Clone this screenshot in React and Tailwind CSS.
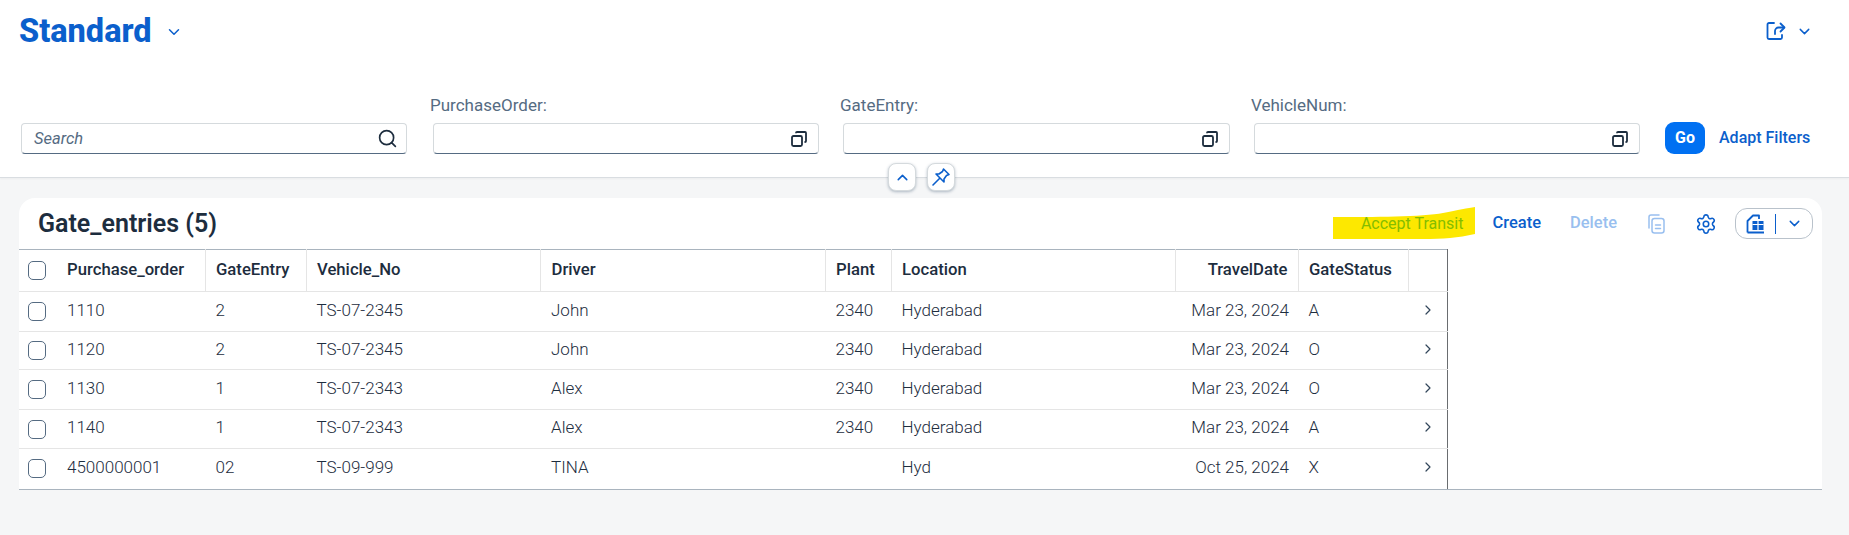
import React from 'react';
import { ChevronDown, ChevronUp, ChevronRight, Search, Settings } from 'lucide-react';

const rows = [
    { po: '1110', gate: '2', vehicle: 'TS-07-2345', driver: 'John', plant: '2340', location: 'Hyderabad', date: 'Mar 23, 2024', status: 'A', h: 'h-[40px]' },
    { po: '1120', gate: '2', vehicle: 'TS-07-2345', driver: 'John', plant: '2340', location: 'Hyderabad', date: 'Mar 23, 2024', status: 'O', h: 'h-[38px]' },
    { po: '1130', gate: '1', vehicle: 'TS-07-2343', driver: 'Alex', plant: '2340', location: 'Hyderabad', date: 'Mar 23, 2024', status: 'O', h: 'h-[40px]' },
    { po: '1140', gate: '1', vehicle: 'TS-07-2343', driver: 'Alex', plant: '2340', location: 'Hyderabad', date: 'Mar 23, 2024', status: 'A', h: 'h-[39px]' },
    { po: '4500000001', gate: '02', vehicle: 'TS-09-999', driver: 'TINA', plant: '', location: 'Hyd', date: 'Oct 25, 2024', status: 'X', h: 'h-[40px]' },
];

const ValueHelpIcon = () => (
    <svg width="18" height="18" viewBox="0 0 18 18" fill="none" stroke="#1d2d3e" strokeWidth="1.8">
        <rect x="2" y="6" width="10" height="10" rx="1.5" />
        <path d="M6 3.2 V3 a1 1 0 0 1 1-1 h8 a1 1 0 0 1 1 1 v8 a1 1 0 0 1-1 1 h-.5" />
    </svg>
);

const ShareIcon = () => (
    <svg width="20" height="20" viewBox="0 0 20 20" fill="none" stroke="#0b5fcc" strokeWidth="1.8" strokeLinecap="round" strokeLinejoin="round">
        <path d="M8 2 H3 a1.5 1.5 0 0 0-1.5 1.5 v13 A1.5 1.5 0 0 0 3 18 h11.5 a1.5 1.5 0 0 0 1.5-1.5 V14" />
        <path d="M9 13 V10 a3.5 3.5 0 0 1 3.5-3.5 H18" />
        <path d="M14.5 2.5 L18.5 6.5 L14.5 10.5" />
    </svg>
);

const PinIcon = () => (
    <svg width="20" height="20" viewBox="0 0 20 20" fill="none" stroke="#0b5fcc" strokeWidth="1.6" strokeLinejoin="round" strokeLinecap="round">
        <path d="M12.5 2 L18 7.5 L15.5 8.5 L13 12 L13 15 L5 7 L8 7 L11.5 4.5 Z" />
        <path d="M8.5 11.5 L2 18" />
    </svg>
);

const CopyIcon = () => (
    <svg width="18" height="20" viewBox="0 0 18 20" fill="none" stroke="#99bfef" strokeWidth="1.5" strokeLinecap="round" strokeLinejoin="round">
        <path d="M2 14 V3 a2 2 0 0 1 2-2 h8" />
        <rect x="5" y="4.5" width="12" height="14.5" rx="2.5" />
        <path d="M8.5 11 h5 M8.5 14.5 h5" />
    </svg>
);

const TableViewIcon = () => (
    <svg width="19" height="20" viewBox="0 0 19 20" fill="none" stroke="#0b5fcc" strokeWidth="1.8" strokeLinejoin="round">
        <path d="M1.5 18.5 V7 L7 1.5 H13 V5" />
        <path d="M1.5 18.5 H18" />
        <rect x="6.5" y="7" width="11" height="9" fill="#0b5fcc" stroke="none" />
        <path d="M6.5 10.5 h11 M12 7 v9" stroke="#fff" strokeWidth="1.2" />
    </svg>
);

const Field = ({ label, widthClass }) => (
    <div className={`flex flex-col ${widthClass}`}>
        <label className="mb-[8px] ml-[-3px] h-[21px] pt-[1px] text-[17px] leading-[20px] text-[#556b82]">{label}</label>
        <div className="flex h-[31px] items-center justify-end rounded-[4px] border border-[#d5dadd] border-b-[#556b82] pr-[10px]">
            <ValueHelpIcon />
        </div>
    </div>
);

const Checkbox = () => (
    <span className="block h-[19px] w-[18px] rounded-[5px] border border-[#556b82] bg-white" />
);

const HeadCell = ({ children, right }) => (
    <th className={`border-r border-[#e5e5e5] pb-[1px] pl-[10.5px] pr-[10px] text-[16.7px] font-medium text-[#1d2d3e] ${right ? 'text-right' : 'text-left'}`}>
        {children}
    </th>
);

export default function App() {
    return (
        <div className="relative flex h-[535px] flex-col bg-[#f5f6f7] font-['Roboto',sans-serif] text-[#1d2d3e]">
            {/* Filter header */}
            <header className="relative h-[178px] border-b border-[#d9dde1] bg-white shadow-[0_1px_2px_rgba(0,0,0,0.04)]">
                <div className="flex h-[62px] items-center justify-between pl-[19px] pr-[36px]">
                    <div className="flex items-center gap-[13px]">
                        <h1 className="text-[32.5px] font-extrabold leading-none text-[#0b5fcc]">Standard</h1>
                        <ChevronDown size={18} strokeWidth={2} className="mt-[2px] text-[#0b5fcc]" />
                    </div>
                    <div className="flex items-center gap-[10px]">
                        <ShareIcon />
                        <ChevronDown size={17} strokeWidth={2} className="text-[#0b5fcc]" />
                    </div>
                </div>

                <div className="flex items-end pl-[21px] pt-[32px]">
                    <div className="flex h-[31px] w-[386px] items-center justify-between rounded-[4px] border border-[#d5dadd] border-b-[#556b82] pl-[12px] pr-[8px]">
                        <span className="pt-[2px] text-[16.5px] italic text-[#556b82]">Search</span>
                        <Search size={21} strokeWidth={1.9} className="text-[#1d2d3e]" />
                    </div>
                    <div className="ml-[26px] flex items-end gap-[24px]">
                        <Field label="PurchaseOrder:" widthClass="w-[386px]" />
                        <Field label="GateEntry:" widthClass="w-[387px]" />
                        <Field label="VehicleNum:" widthClass="w-[386px]" />
                    </div>
                    <button className="ml-[25px] flex h-[32px] w-[40px] items-center justify-center rounded-[9px] bg-[#0070f2] text-[16px] font-bold text-white">
                        Go
                    </button>
                    <span className="ml-[14px] flex h-[32px] items-center text-[16px] font-medium text-[#0b5fcc]">Adapt Filters</span>
                </div>

                {/* Collapse and pin buttons sit over the header edge */}
                <div className="absolute left-[888px] top-[163px] z-10 flex gap-[11px]">
                    <button className="flex h-[28px] w-[28px] items-center justify-center rounded-[8px] border border-[#d5dadd] bg-white shadow-[0_1px_3px_rgba(85,107,130,0.45)]">
                        <ChevronUp size={17} strokeWidth={2.2} className="text-[#0b5fcc]" />
                    </button>
                    <button className="flex h-[28px] w-[28px] items-center justify-center rounded-[8px] border border-[#d5dadd] bg-white shadow-[0_1px_3px_rgba(85,107,130,0.45)]">
                        <PinIcon />
                    </button>
                </div>
            </header>

            {/* Table card */}
            <section className="ml-[19px] mr-[27px] mt-[20px] overflow-hidden rounded-t-[16px] border-b border-[#a9b4be] bg-white">
                <div className="relative flex h-[51px] items-center justify-between pl-[19px] pr-[9px]">
                    <h2 className="text-[25px] font-semibold text-[#1d2d3e]">Gate_entries (5)</h2>
                    <div className="flex items-center">
                        {/* Marker stroke drawn over the screenshot */}
                        <svg className="absolute right-[347px] top-[9px]" width="142" height="33" viewBox="0 0 142 33">
                            <path d="M0 10 C40 10 90 10 110 6 C125 3 135 1 142 0 L142 27 C125 31 110 32 90 32 L0 32 Z" fill="#fde800" />
                        </svg>
                        <span className="relative mr-[2px] text-[16px] font-normal text-[#84bd00]">Accept Transit</span>
                        <span className="ml-[27px] text-[16.5px] font-medium text-[#0b5fcc]">Create</span>
                        <span className="ml-[29px] text-[16.5px] font-medium text-[#99bfef]">Delete</span>
                        <span className="ml-[30px]"><CopyIcon /></span>
                        <Settings size={22} strokeWidth={1.7} className="ml-[30px] text-[#0b5fcc]" />
                        <div className="ml-[18px] flex h-[31px] w-[78px] items-center justify-center rounded-[12px] border border-[#b9c2cb]">
                            <TableViewIcon />
                            <span className="mx-[10px] h-[20px] w-px bg-[#0b5fcc]" />
                            <ChevronDown size={17} strokeWidth={2} className="text-[#0b5fcc]" />
                        </div>
                    </div>
                </div>

                <table className="w-[1428px] table-fixed border-collapse border-r border-t border-[#a9b4be] bg-white [border-right-color:#6a6d70]">
                    <colgroup>
                        <col className="w-[38px]" />
                        <col className="w-[148px]" />
                        <col className="w-[101px]" />
                        <col className="w-[234.5px]" />
                        <col className="w-[284.5px]" />
                        <col className="w-[66px]" />
                        <col className="w-[284.5px]" />
                        <col className="w-[122.5px]" />
                        <col className="w-[110.5px]" />
                        <col className="w-[38.5px]" />
                    </colgroup>
                    <thead>
                        <tr className="h-[42px] border-b border-[#e5e5e5]">
                            <th className="pl-[9px]"><Checkbox /></th>
                            <th className="border-r border-[#e5e5e5] pb-[1px] pl-[10px] text-left text-[16.7px] font-medium text-[#1d2d3e]">Purchase_order</th>
                            <HeadCell>GateEntry</HeadCell>
                            <HeadCell>Vehicle_No</HeadCell>
                            <HeadCell>Driver</HeadCell>
                            <HeadCell>Plant</HeadCell>
                            <HeadCell>Location</HeadCell>
                            <HeadCell right>TravelDate</HeadCell>
                            <HeadCell>GateStatus</HeadCell>
                            <th />
                        </tr>
                    </thead>
                    <tbody className="text-[17px] font-light text-[#1d2d3e]">
                        {rows.map((row) => (
                            <tr key={row.po} className={`${row.h} border-b border-[#e5e5e5] last:border-b-0`}>
                                <td className="pl-[9px]"><Checkbox /></td>
                                <td className="pb-[2px] pl-[10px]">{row.po}</td>
                                <td className="pb-[2px] pl-[10.5px] pr-[10px]">{row.gate}</td>
                                <td className="pb-[2px] pl-[10.5px] pr-[10px]">{row.vehicle}</td>
                                <td className="pb-[2px] pl-[10.5px] pr-[10px]">{row.driver}</td>
                                <td className="pb-[2px] pl-[10.5px] pr-[10px]">{row.plant}</td>
                                <td className="pb-[2px] pl-[10.5px] pr-[10px]">{row.location}</td>
                                <td className="pb-[2px] pr-[9px] text-right">{row.date}</td>
                                <td className="pb-[2px] pl-[10.5px] pr-[10px]">{row.status}</td>
                                <td className="pb-[4px] pl-[11px]"><ChevronRight size={16} strokeWidth={1.8} className="text-[#32465a]" /></td>
                            </tr>
                        ))}
                    </tbody>
                </table>
            </section>
        </div>
    );
}
